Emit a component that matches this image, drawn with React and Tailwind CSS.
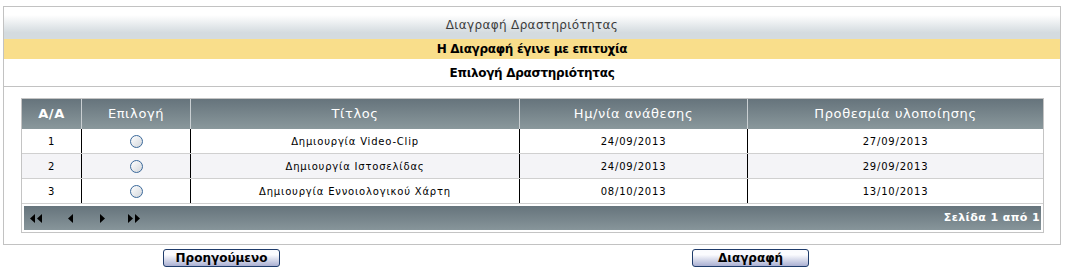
import React from 'react';

const rows = [
  { n: 1, title: 'Δημιουργία Video-Clip', start: '24/09/2013', end: '27/09/2013' },
  { n: 2, title: 'Δημιουργία Ιστοσελίδας', start: '24/09/2013', end: '29/09/2013' },
  { n: 3, title: 'Δημιουργία Εννοιολογικού Χάρτη', start: '08/10/2013', end: '13/10/2013' },
];

const cols = 'grid grid-cols-[60px_109px_329px_228px_295px]';

function Radio() {
  return (
    <span className="inline-block w-[13px] h-[13px] rounded-full border border-[#3a689a] bg-linear-to-br from-white to-[#d2d6db]" />
  );
}

function Tri({ dir }) {
  return (
    <svg width="5" height="9" viewBox="0 0 5 9" className="block">
      {dir === 'left' ? <polygon points="5,0 5,9 0,4.5" fill="#000" /> : <polygon points="0,0 0,9 5,4.5" fill="#000" />}
    </svg>
  );
}

function Button({ children, className = '' }) {
  return (
    <button className={`block w-[117px] h-[18px] rounded-[3px] border border-[#1f3c6b] bg-linear-to-b from-[#fbfbfe] from-30% to-[#aab0d2] text-[12px] font-bold text-black leading-none ${className}`}>
      {children}
    </button>
  );
}

export default function App() {
  return (
    <div className="w-[1073px] h-[272px] bg-white pt-[6px] pl-[3px] font-['DejaVu_Sans',Verdana,sans-serif] text-black">
      <div className="w-[1058px] h-[239px] border border-[#c2c2c2] flex flex-col">
        {/* title */}
        <div className="h-[32px] flex items-center justify-center pt-[4px] bg-linear-to-b from-white from-25% to-[#d4dbdf] to-80% text-[12px] tracking-[0.35px] text-[#3c3c3c]">
          Διαγραφή Δραστηριότητας
        </div>
        <div className="h-[20px] flex items-center justify-center bg-[#f9de8b] text-[12px] font-bold tracking-[-0.3px]">
          Η Διαγραφή έγινε με επιτυχία
        </div>
        <div className="h-[28px] flex items-center justify-center border-b border-[#c2c2c2] text-[12px] font-bold tracking-[-0.3px]">
          Επιλογή Δραστηριότητας
        </div>

        {/* table */}
        <div className="mt-[11px] ml-[17px] w-[1023px] border border-[#c4c4c4]">
          <div className={`${cols} h-[30px] bg-linear-to-b from-[#66747c] to-[#8a989c] text-white text-[13px] tracking-[0.6px]`}>
            {['Α/Α', 'Επιλογή', 'Τίτλος', 'Ημ/νία ανάθεσης', 'Προθεσμία υλοποίησης'].map((h, i) => (
              <div key={h} className={`flex items-center justify-center ${i < 4 ? 'border-r border-[#c9cfd2]' : ''} ${i === 0 ? 'font-bold' : ''}`}>
                {h}
              </div>
            ))}
          </div>
          {rows.map((r) => (
            <div key={r.n} className={`${cols} h-[25px] border-b border-[#d0d0d0] text-[10px] tracking-[0.8px] ${r.n === 2 ? 'bg-[#f4f4f7]' : 'bg-white'}`}>
              <div className="flex items-center justify-center border-r border-black">{r.n}</div>
              <div className="flex items-center justify-center border-r border-black"><Radio /></div>
              <div className="flex items-center justify-center border-r border-black">{r.title}</div>
              <div className="flex items-center justify-center border-r border-black">{r.start}</div>
              <div className="flex items-center justify-center">{r.end}</div>
            </div>
          ))}
          <div className="p-[2px]">
            <div className="h-[24px] flex items-center bg-linear-to-b from-[#66747c] to-[#87959a] pl-[6px] pr-[1px]">
              <span className="flex gap-[2px]"><Tri dir="left" /><Tri dir="left" /></span>
              <span className="ml-[26px]"><Tri dir="left" /></span>
              <span className="ml-[27px]"><Tri dir="right" /></span>
              <span className="ml-[23px] flex gap-[2px]"><Tri dir="right" /><Tri dir="right" /></span>
              <span className="ml-auto text-white text-[11px] font-bold tracking-[0.4px]">Σελίδα 1 από 1</span>
            </div>
          </div>
        </div>
      </div>

      <div className="mt-[4px] flex items-start pl-[160px]">
        <Button>Προηγούμενο</Button>
        <Button className="ml-[412px]">Διαγραφή</Button>
      </div>
    </div>
  );
}
